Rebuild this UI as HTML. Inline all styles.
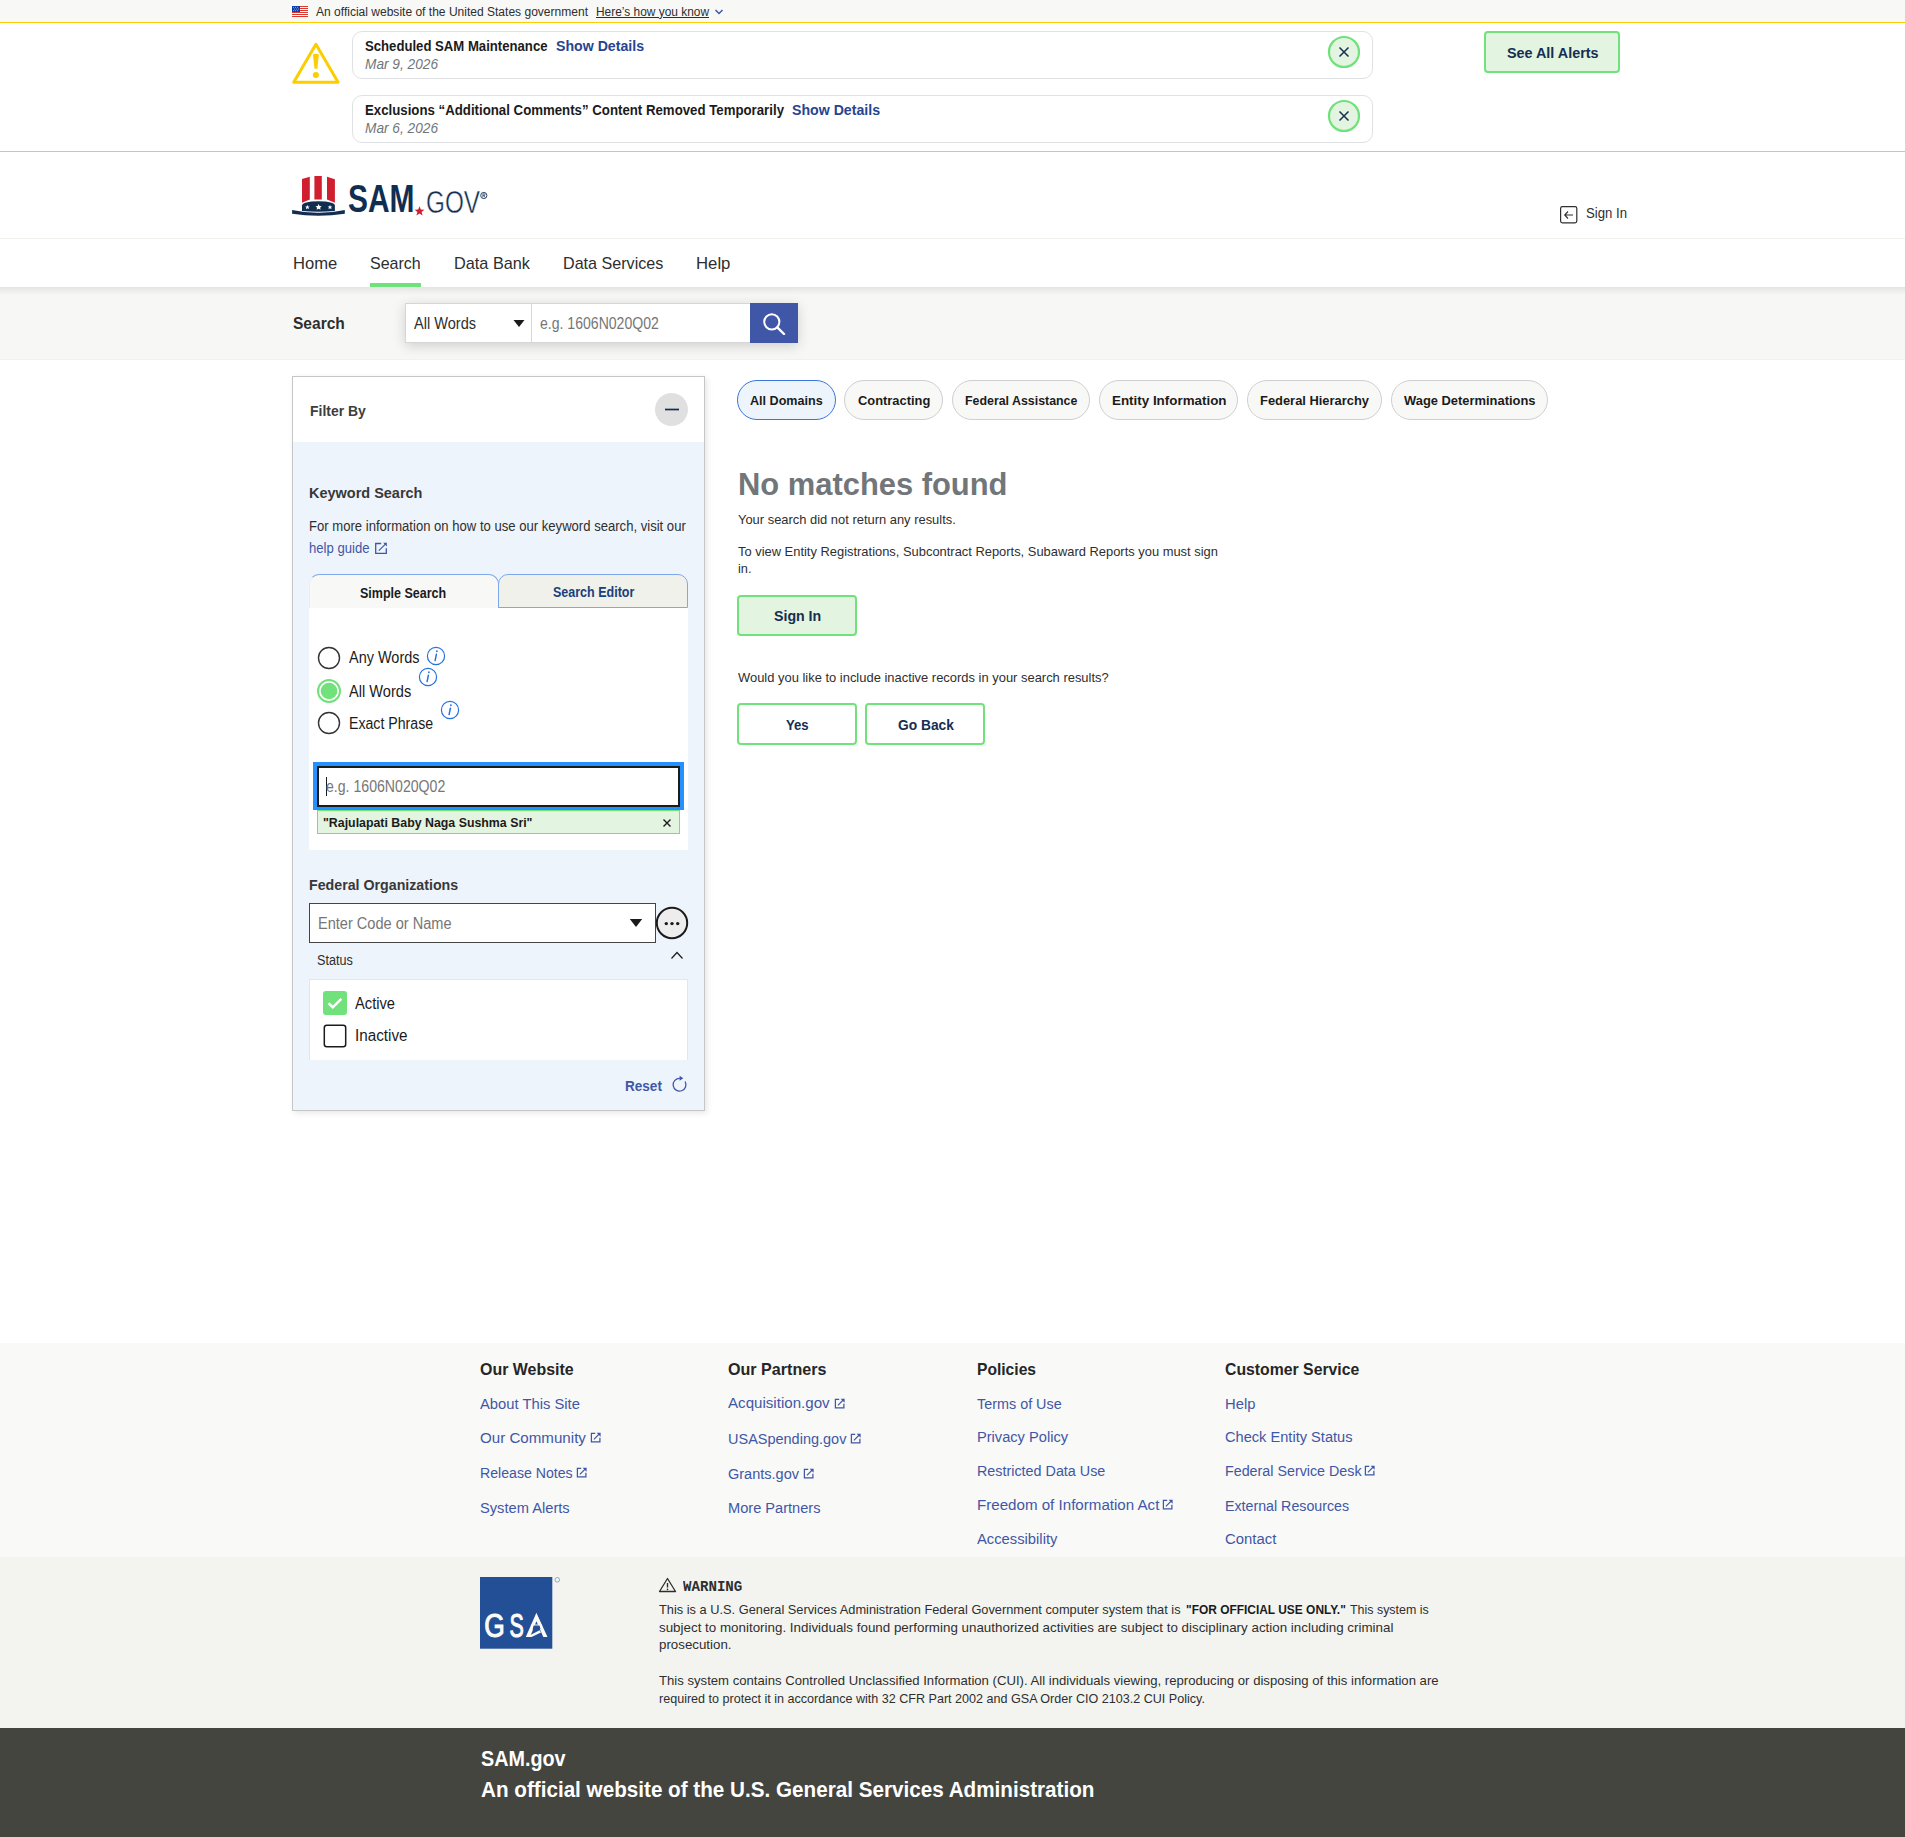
<!DOCTYPE html>
<html><head><meta charset="utf-8"><title>SAM.gov Search</title>
<style>
html,body{margin:0;padding:0;}
body{width:1905px;height:1837px;position:relative;overflow:hidden;background:#fff;font-family:'Liberation Sans', sans-serif;}
.t{position:absolute;white-space:pre;transform-origin:0 0;display:block;}
</style></head><body>
<div style="position:absolute;left:0px;top:0px;width:1905px;height:22px;background:#f8f8f6;"></div>
<div style="position:absolute;left:0px;top:22px;width:1905px;height:1px;background:#face00;"></div>
<svg style="position:absolute;left:292px;top:6px" width="16" height="11" viewBox="0 0 16 11">
<rect width="16" height="11" fill="#fff"/>
<g fill="#d83933"><rect y="0" width="16" height="1"/><rect y="2" width="16" height="1"/><rect y="4" width="16" height="1"/><rect y="6" width="16" height="1"/><rect y="8" width="16" height="1"/><rect y="10" width="16" height="1"/></g>
<rect width="8" height="6" fill="#0b3ea8"/>
<g fill="#fff"><circle cx="1.5" cy="1.2" r=".45"/><circle cx="3.5" cy="1.2" r=".45"/><circle cx="5.5" cy="1.2" r=".45"/><circle cx="2.5" cy="3" r=".45"/><circle cx="4.5" cy="3" r=".45"/><circle cx="6.5" cy="3" r=".45"/><circle cx="1.5" cy="4.8" r=".45"/><circle cx="3.5" cy="4.8" r=".45"/><circle cx="5.5" cy="4.8" r=".45"/></g>
</svg>
<svg style="position:absolute;left:714px;top:8px" width="10" height="8" viewBox="0 0 10 8"><path d="M1.5 2 L5 5.5 L8.5 2" fill="none" stroke="#3f57a6" stroke-width="1.5"/></svg>
<svg style="position:absolute;left:291px;top:41px" width="50" height="45" viewBox="0 0 50 45">
<path d="M24.9 3.3 L47.1 41.3 L2.7 41.3 Z" fill="none" stroke="#face00" stroke-width="3" stroke-linejoin="round"/>
<path d="M21.9 13.5 Q24.9 11.8 27.9 13.5 L26.3 27.8 L23.5 27.8 Z" fill="#face00"/>
<circle cx="24.9" cy="33.9" r="3" fill="#face00"/>
</svg>
<div style="position:absolute;left:352px;top:31px;width:1021px;height:48px;box-sizing:border-box;border:1px solid #dfe1e2;border-radius:10px;background:#fff;"></div>
<div style="position:absolute;left:352px;top:95px;width:1021px;height:48px;box-sizing:border-box;border:1px solid #dfe1e2;border-radius:10px;background:#fff;"></div>
<svg style="position:absolute;left:1327px;top:35px" width="34" height="34" viewBox="0 0 34 34">
<circle cx="17" cy="17" r="15" fill="#e3f4e0" stroke="#70e17b" stroke-width="2.2"/>
<path d="M12.5 12.5 L21.5 21.5 M21.5 12.5 L12.5 21.5" stroke="#162e51" stroke-width="1.5"/>
</svg>
<svg style="position:absolute;left:1327px;top:99px" width="34" height="34" viewBox="0 0 34 34">
<circle cx="17" cy="17" r="15" fill="#e3f4e0" stroke="#70e17b" stroke-width="2.2"/>
<path d="M12.5 12.5 L21.5 21.5 M21.5 12.5 L12.5 21.5" stroke="#162e51" stroke-width="1.5"/>
</svg>
<div style="position:absolute;left:1484px;top:31px;width:136px;height:42px;box-sizing:border-box;border:2px solid #70e17b;border-radius:4px;background:#e3f4e0;"></div>
<div style="position:absolute;left:0px;top:151px;width:1905px;height:1px;background:#face00;"></div>
<div style="position:absolute;left:0px;top:238px;width:1905px;height:1px;background:#f0f0ec;"></div>
<svg style="position:absolute;left:290px;top:174px" width="58" height="45" viewBox="0 0 58 45">
<path d="M12 5.1 L19.8 2.8 L19.8 25.6 L12 28.7 Z" fill="#d01f2e"/>
<path d="M24.4 2 L31.8 2 L31.8 25.6 Q28.1 25.2 24.4 25.6 Z" fill="#d01f2e"/>
<path d="M37 2.8 L44.9 5.3 L44.9 28.7 L37 25.6 Z" fill="#d01f2e"/>
<path d="M12 31.5 Q12.5 27.4 28.4 27.2 Q44.4 27.4 44.9 31.5 L44.9 37 Q28.4 38.4 12 37 Z" fill="#112e51"/>
<g fill="#fff"><path d="M17.4 30.9 l.7 1.5 1.6 .15 -1.2 1.05 .4 1.6 -1.5-.85 -1.5 .85 .4-1.6 -1.2-1.05 1.6-.15z"/><path d="M28.6 30.1 l.95 2 2.15 .2 -1.6 1.4 .5 2.15 -2-1.15 -2 1.15 .5-2.15 -1.6-1.4 2.15-.2z"/><path d="M40 30.9 l.7 1.5 1.6 .15 -1.2 1.05 .4 1.6 -1.5-.85 -1.5 .85 .4-1.6 -1.2-1.05 1.6-.15z"/></g>
<path d="M2.1 36 Q15 38.9 28.4 38.8 Q41.8 38.9 54.8 36 L54.8 39.8 Q41.8 41.8 28.4 41.8 Q15 41.8 2.1 39.8 Z" fill="#112e51"/>
</svg>
<svg style="position:absolute;left:414px;top:206px" width="11" height="10" viewBox="0 0 11 10"><path d="M5.5 0.3 L6.8 3.6 L10.4 3.7 L7.6 5.9 L8.6 9.4 L5.5 7.4 L2.4 9.4 L3.4 5.9 L0.6 3.7 L4.2 3.6 Z" fill="#d21f30"/></svg>
<svg style="position:absolute;left:479px;top:191px" width="10" height="10" viewBox="0 0 10 10"><circle cx="4.8" cy="4.5" r="3.1" fill="none" stroke="#112e51" stroke-width="0.9"/><path d="M3.9 6.4 L3.9 2.8 L5.1 2.8 Q6.1 2.9 6.1 3.7 Q6.1 4.5 5.1 4.6 L3.9 4.6 M5 4.6 L6.1 6.4" fill="none" stroke="#112e51" stroke-width="0.7"/></svg>
<svg style="position:absolute;left:1559px;top:205px" width="20" height="19" viewBox="0 0 20 19"><rect x="1.6" y="1.6" width="16.2" height="16.2" rx="1.8" fill="none" stroke="#2e2e2e" stroke-width="1.2"/><path d="M14 10 L6 10 M9 6.5 L5.7 10 L9 13.5" fill="none" stroke="#2e2e2e" stroke-width="1.1"/></svg>
<div style="position:absolute;left:370px;top:283px;width:51px;height:4px;background:#70e17b;"></div>
<div style="position:absolute;left:0px;top:287px;width:1905px;height:72px;background:#f7f7f5;"></div>
<div style="position:absolute;left:0px;top:287px;width:1905px;height:8px;background:linear-gradient(#e4e4e2, rgba(247,247,245,0));"></div>
<div style="position:absolute;left:0px;top:359px;width:1905px;height:1px;background:#f1f1ee;"></div>
<div style="position:absolute;left:405px;top:303px;width:393px;height:40px;box-shadow:0 3px 12px rgba(0,0,0,0.16);"></div>
<div style="position:absolute;left:405px;top:303px;width:127px;height:40px;box-sizing:border-box;background:#fff;border:1px solid #d6d6d6;"></div>
<svg style="position:absolute;left:513px;top:319px" width="12" height="9" viewBox="0 0 12 9"><path d="M0.5 1 L11.5 1 L6 8 Z" fill="#1b1b1b"/></svg>
<div style="position:absolute;left:531px;top:303px;width:220px;height:40px;box-sizing:border-box;background:#fff;border:1px solid #d6d6d6;border-left:1px solid #d6d6d6;"></div>
<div style="position:absolute;left:750px;top:303px;width:48px;height:40px;background:#3f57a6;"></div>
<svg style="position:absolute;left:762px;top:312px" width="24" height="23" viewBox="0 0 24 23"><circle cx="9.8" cy="9.8" r="7.6" fill="none" stroke="#fff" stroke-width="2"/><path d="M15.3 15.3 L22 22" stroke="#fff" stroke-width="2.4" stroke-linecap="round"/></svg>
<div style="position:absolute;left:292px;top:376px;width:413px;height:735px;box-sizing:border-box;border:1px solid #c6c6c6;background:#eef4fb;box-shadow:2px 2px 6px rgba(0,0,0,0.10);"></div>
<div style="position:absolute;left:293px;top:377px;width:411px;height:65px;background:#fff;"></div>
<svg style="position:absolute;left:654px;top:392px" width="35" height="35" viewBox="0 0 35 35"><circle cx="17.5" cy="17.5" r="16.5" fill="#e0e0e0"/><path d="M11 17.5 L25 17.5" stroke="#112e51" stroke-width="1.7"/></svg>
<svg style="position:absolute;left:374px;top:542px" width="14" height="13" viewBox="0 0 14 13"><path d="M7.2 1.5 L1.7 1.5 L1.7 11.3 L12.3 11.3 L12.3 6.2" fill="none" stroke="#3f57a6" stroke-width="1.3"/><path d="M4.8 8.6 L12.2 1.4" stroke="#3f57a6" stroke-width="1.2"/><path d="M9.2 0.8 L12.8 0.8 L12.8 4.4 Z" fill="#3f57a6"/></svg>
<div style="position:absolute;left:309px;top:607px;width:379px;height:243px;background:#fff;"></div>
<div style="position:absolute;left:309px;top:574px;width:190px;height:34px;box-sizing:border-box;background:#f8f8f6;border:1px solid #7fa8ea;border-left-color:#e6eef9;border-bottom:none;border-radius:10px 10px 0 0;"></div>
<div style="position:absolute;left:498px;top:574px;width:190px;height:34px;box-sizing:border-box;background:#f1f1ec;border:1px solid #7fa8ea;border-radius:10px 10px 0 0;"></div>
<div style="position:absolute;left:309.5px;top:607px;width:188.5px;height:1px;background:#f8f8f6;"></div>
<svg style="position:absolute;left:316px;top:645px" width="26" height="26" viewBox="0 0 26 26"><circle cx="13" cy="13" r="10.5" fill="#fff" stroke="#333" stroke-width="1.4"/></svg>
<svg style="position:absolute;left:316px;top:678px" width="26" height="26" viewBox="0 0 26 26"><circle cx="13" cy="13" r="11" fill="#fff" stroke="#70e17b" stroke-width="2"/><circle cx="13" cy="13" r="8.3" fill="#70e17b"/></svg>
<svg style="position:absolute;left:316px;top:710px" width="26" height="26" viewBox="0 0 26 26"><circle cx="13" cy="13" r="10.5" fill="#fff" stroke="#333" stroke-width="1.4"/></svg>
<svg style="position:absolute;left:426px;top:646.2px" width="20" height="20" viewBox="0 0 20 20"><circle cx="10" cy="10" r="8.6" fill="none" stroke="#2672de" stroke-width="1.2"/><path d="M10.9 5.2 l0 0.1" stroke="#2672de" stroke-width="1.8" stroke-linecap="round"/><path d="M10.4 8.2 L9.1 14.6" stroke="#2672de" stroke-width="1.5" stroke-linecap="round"/></svg>
<svg style="position:absolute;left:418px;top:666.8px" width="20" height="20" viewBox="0 0 20 20"><circle cx="10" cy="10" r="8.6" fill="none" stroke="#2672de" stroke-width="1.2"/><path d="M10.9 5.2 l0 0.1" stroke="#2672de" stroke-width="1.8" stroke-linecap="round"/><path d="M10.4 8.2 L9.1 14.6" stroke="#2672de" stroke-width="1.5" stroke-linecap="round"/></svg>
<svg style="position:absolute;left:440.1px;top:700.3px" width="20" height="20" viewBox="0 0 20 20"><circle cx="10" cy="10" r="8.6" fill="none" stroke="#2672de" stroke-width="1.2"/><path d="M10.9 5.2 l0 0.1" stroke="#2672de" stroke-width="1.8" stroke-linecap="round"/><path d="M10.4 8.2 L9.1 14.6" stroke="#2672de" stroke-width="1.5" stroke-linecap="round"/></svg>
<div style="position:absolute;left:313px;top:762px;width:371px;height:48px;box-sizing:border-box;border:4px solid #2491ff;background:#fff;"></div>
<div style="position:absolute;left:317px;top:766px;width:363px;height:41px;box-sizing:border-box;border:2px solid #1b1b1b;background:#fff;"></div>
<div style="position:absolute;left:326px;top:777px;width:1px;height:19px;background:#1b1b1b;"></div>
<div style="position:absolute;left:317px;top:810px;width:363px;height:24px;box-sizing:border-box;border:1px solid #70e17b;background:#e3f4e0;"></div>
<svg style="position:absolute;left:662px;top:818px" width="10" height="10" viewBox="0 0 10 10"><path d="M1.5 1.5 L8.5 8.5 M8.5 1.5 L1.5 8.5" stroke="#1b1b1b" stroke-width="1.4"/></svg>
<div style="position:absolute;left:309px;top:903px;width:347px;height:40px;box-sizing:border-box;border:1.5px solid #454545;background:#fff;"></div>
<svg style="position:absolute;left:629px;top:918px" width="14" height="10" viewBox="0 0 14 10"><path d="M0.8 1 L13.2 1 L7 9 Z" fill="#1b1b1b"/></svg>
<svg style="position:absolute;left:655px;top:906px" width="34" height="34" viewBox="0 0 34 34"><circle cx="17" cy="17" r="15.2" fill="#ededed" stroke="#1b1b1b" stroke-width="2"/><circle cx="11.3" cy="17.6" r="1.7" fill="#1b1b1b"/><circle cx="17" cy="17.6" r="1.7" fill="#1b1b1b"/><circle cx="22.7" cy="17.6" r="1.7" fill="#1b1b1b"/></svg>
<svg style="position:absolute;left:670px;top:950px" width="14" height="10" viewBox="0 0 14 10"><path d="M1.5 8.5 L7 2.5 L12.5 8.5" fill="none" stroke="#1b1b1b" stroke-width="1.2"/></svg>
<div style="position:absolute;left:309px;top:979px;width:379px;height:81px;box-sizing:border-box;border:1px solid #e3e6ea;border-bottom:none;background:#fff;"></div>
<svg style="position:absolute;left:322px;top:990px" width="26" height="26" viewBox="0 0 26 26"><rect x="1" y="1" width="24" height="24" rx="3" fill="#70e17b"/><path d="M6.5 13.2 L10.8 17.3 L19.3 8.8" fill="none" stroke="#fff" stroke-width="2.6"/></svg>
<svg style="position:absolute;left:322px;top:1023px" width="26" height="26" viewBox="0 0 26 26"><rect x="2.3" y="2.3" width="21.4" height="21.4" rx="2.5" fill="#fff" stroke="#1b1b1b" stroke-width="1.5"/></svg>
<svg style="position:absolute;left:671px;top:1075px" width="17" height="18" viewBox="0 0 17 18"><path d="M14.1 6.5 A6.4 6.4 0 1 1 8.9 3.3" fill="none" stroke="#3f57a6" stroke-width="1.3"/><path d="M8.6 0.8 L12.3 3.3 L8.6 5.8 Z" fill="#3f57a6"/></svg>
<div style="position:absolute;left:737px;top:380px;width:99px;height:40px;box-sizing:border-box;border:1px solid #3a77d8;background:#eef4fb;border-radius:20px;"></div>
<div style="position:absolute;left:844.3px;top:380px;width:98.4px;height:40px;box-sizing:border-box;border:1px solid #cfcfcf;background:#f8f8f6;border-radius:20px;"></div>
<div style="position:absolute;left:951.5px;top:380px;width:138.9px;height:40px;box-sizing:border-box;border:1px solid #cfcfcf;background:#f8f8f6;border-radius:20px;"></div>
<div style="position:absolute;left:1099.2px;top:380px;width:138.8px;height:40px;box-sizing:border-box;border:1px solid #cfcfcf;background:#f8f8f6;border-radius:20px;"></div>
<div style="position:absolute;left:1247px;top:380px;width:135.2px;height:40px;box-sizing:border-box;border:1px solid #cfcfcf;background:#f8f8f6;border-radius:20px;"></div>
<div style="position:absolute;left:1391px;top:380px;width:157px;height:40px;box-sizing:border-box;border:1px solid #cfcfcf;background:#f8f8f6;border-radius:20px;"></div>
<div style="position:absolute;left:737px;top:595px;width:120px;height:41px;box-sizing:border-box;border:2px solid #70e17b;background:#e3f4e0;border-radius:4px;"></div>
<div style="position:absolute;left:737px;top:703px;width:120px;height:42px;box-sizing:border-box;border:2px solid #70e17b;background:#fff;border-radius:4px;"></div>
<div style="position:absolute;left:865px;top:703px;width:120px;height:42px;box-sizing:border-box;border:2px solid #70e17b;background:#fff;border-radius:4px;"></div>
<div style="position:absolute;left:0px;top:1343px;width:1905px;height:214px;background:#f9f9f7;"></div>
<div style="position:absolute;left:0px;top:1557px;width:1905px;height:171px;background:#f3f4ef;"></div>
<div style="position:absolute;left:0px;top:1728px;width:1905px;height:109px;background:#454540;"></div>
<svg style="position:absolute;left:590px;top:1432.2px" width="12" height="12" viewBox="0 0 12 12"><path d="M5.2 1.4 L1.4 1.4 L1.4 9.9 L9.9 9.9 L9.9 5.8" fill="none" stroke="#3f57a6" stroke-width="1.25"/><path d="M3.9 7.3 L9.7 1.5" stroke="#3f57a6" stroke-width="1.15"/><path d="M6.6 0.7 L10.6 0.7 L10.6 4.7 Z" fill="#3f57a6"/></svg>
<svg style="position:absolute;left:576px;top:1467px" width="12" height="12" viewBox="0 0 12 12"><path d="M5.2 1.4 L1.4 1.4 L1.4 9.9 L9.9 9.9 L9.9 5.8" fill="none" stroke="#3f57a6" stroke-width="1.25"/><path d="M3.9 7.3 L9.7 1.5" stroke="#3f57a6" stroke-width="1.15"/><path d="M6.6 0.7 L10.6 0.7 L10.6 4.7 Z" fill="#3f57a6"/></svg>
<svg style="position:absolute;left:834px;top:1397.5px" width="12" height="12" viewBox="0 0 12 12"><path d="M5.2 1.4 L1.4 1.4 L1.4 9.9 L9.9 9.9 L9.9 5.8" fill="none" stroke="#3f57a6" stroke-width="1.25"/><path d="M3.9 7.3 L9.7 1.5" stroke="#3f57a6" stroke-width="1.15"/><path d="M6.6 0.7 L10.6 0.7 L10.6 4.7 Z" fill="#3f57a6"/></svg>
<svg style="position:absolute;left:850px;top:1433px" width="12" height="12" viewBox="0 0 12 12"><path d="M5.2 1.4 L1.4 1.4 L1.4 9.9 L9.9 9.9 L9.9 5.8" fill="none" stroke="#3f57a6" stroke-width="1.25"/><path d="M3.9 7.3 L9.7 1.5" stroke="#3f57a6" stroke-width="1.15"/><path d="M6.6 0.7 L10.6 0.7 L10.6 4.7 Z" fill="#3f57a6"/></svg>
<svg style="position:absolute;left:803px;top:1468px" width="12" height="12" viewBox="0 0 12 12"><path d="M5.2 1.4 L1.4 1.4 L1.4 9.9 L9.9 9.9 L9.9 5.8" fill="none" stroke="#3f57a6" stroke-width="1.25"/><path d="M3.9 7.3 L9.7 1.5" stroke="#3f57a6" stroke-width="1.15"/><path d="M6.6 0.7 L10.6 0.7 L10.6 4.7 Z" fill="#3f57a6"/></svg>
<svg style="position:absolute;left:1162px;top:1499.3px" width="12" height="12" viewBox="0 0 12 12"><path d="M5.2 1.4 L1.4 1.4 L1.4 9.9 L9.9 9.9 L9.9 5.8" fill="none" stroke="#3f57a6" stroke-width="1.25"/><path d="M3.9 7.3 L9.7 1.5" stroke="#3f57a6" stroke-width="1.15"/><path d="M6.6 0.7 L10.6 0.7 L10.6 4.7 Z" fill="#3f57a6"/></svg>
<svg style="position:absolute;left:1364px;top:1465px" width="12" height="12" viewBox="0 0 12 12"><path d="M5.2 1.4 L1.4 1.4 L1.4 9.9 L9.9 9.9 L9.9 5.8" fill="none" stroke="#3f57a6" stroke-width="1.25"/><path d="M3.9 7.3 L9.7 1.5" stroke="#3f57a6" stroke-width="1.15"/><path d="M6.6 0.7 L10.6 0.7 L10.6 4.7 Z" fill="#3f57a6"/></svg>
<svg style="position:absolute;left:480px;top:1577px" width="81" height="72" viewBox="0 0 81 72"><rect x="0" y="0" width="72.3" height="71.7" fill="#234f96"/>
<text x="4.3" y="60.1" font-family="Liberation Sans" font-size="34" fill="#fbfbf7" stroke="#fbfbf7" stroke-width="1.1" textLength="20.5" lengthAdjust="spacingAndGlyphs">G</text>
<text x="29.6" y="60.1" font-family="Liberation Sans" font-size="34" fill="#fbfbf7" stroke="#fbfbf7" stroke-width="1.1" textLength="14.3" lengthAdjust="spacingAndGlyphs">S</text>
<path d="M45.8 60.1 L56.4 35.7 L67.5 60.1 L63.3 60.1 L56.4 44.3 L50 60.1 Z" fill="#fbfbf7"/>
<path d="M51.3 47.4 L61.6 47.4 L62.3 49 L50.6 49 Z" fill="#fbfbf7"/>
<path d="M46.5 60.1 L51.5 60.1 L61 55.6 L59.6 53.2 Z" fill="#fbfbf7"/>
<path d="M53.6 48.6 L59.5 48.6 L60.5 52 L57.2 53.2 L52.6 52.4 Z" fill="#234f96"/>
<circle cx="77.3" cy="2.8" r="2.3" fill="none" stroke="#7f97c4" stroke-width="0.8"/></svg>
<svg style="position:absolute;left:658px;top:1577px" width="19" height="16" viewBox="0 0 19 16"><path d="M9.5 1.5 L17.5 14.5 L1.5 14.5 Z" fill="none" stroke="#2e2e2e" stroke-width="1.3" stroke-linejoin="round"/><path d="M9.5 6 L9.5 10.5" stroke="#2e2e2e" stroke-width="1.4"/><circle cx="9.5" cy="12.4" r=".8" fill="#2e2e2e"/></svg>
<span class="t" style="left:316px;top:5.84px;font-size:12px;line-height:12px;font-family:'Liberation Sans', sans-serif;font-weight:400;color:#2e2e2e;transform:scaleX(1.0027);">An official website of the United States government</span>
<span class="t" style="left:596px;top:5.84px;font-size:12px;line-height:12px;font-family:'Liberation Sans', sans-serif;font-weight:400;color:#2e2e2e;transform:scaleX(0.9926);text-decoration:underline;">Here’s how you know</span>
<span class="t" style="left:365px;top:39.15px;font-size:14px;line-height:14px;font-family:'Liberation Sans', sans-serif;font-weight:700;color:#1b1b1b;transform:scaleX(0.9384);">Scheduled SAM Maintenance</span>
<span class="t" style="left:556px;top:39.15px;font-size:14px;line-height:14px;font-family:'Liberation Sans', sans-serif;font-weight:700;color:#27448f;transform:scaleX(1.0099);">Show Details</span>
<span class="t" style="left:365px;top:57.15px;font-size:14px;line-height:14px;font-family:'Liberation Sans', sans-serif;font-weight:400;color:#71767a;transform:scaleX(0.9770);font-style:italic;">Mar 9, 2026</span>
<span class="t" style="left:365px;top:103.15px;font-size:14px;line-height:14px;font-family:'Liberation Sans', sans-serif;font-weight:700;color:#1b1b1b;transform:scaleX(0.9455);">Exclusions “Additional Comments” Content Removed Temporarily</span>
<span class="t" style="left:792px;top:103.15px;font-size:14px;line-height:14px;font-family:'Liberation Sans', sans-serif;font-weight:700;color:#27448f;transform:scaleX(1.0099);">Show Details</span>
<span class="t" style="left:365px;top:121.15px;font-size:14px;line-height:14px;font-family:'Liberation Sans', sans-serif;font-weight:400;color:#71767a;transform:scaleX(0.9770);font-style:italic;">Mar 6, 2026</span>
<span class="t" style="left:1507px;top:45.30px;font-size:15px;line-height:15px;font-family:'Liberation Sans', sans-serif;font-weight:700;color:#162e51;transform:scaleX(0.9570);">See All Alerts</span>
<span class="t" style="left:347.6px;top:180.21px;font-size:38.5px;line-height:38.5px;font-family:'Liberation Sans', sans-serif;font-weight:700;color:#112e51;transform:scaleX(0.7772);">SAM</span>
<span class="t" style="left:425.8px;top:187.16px;font-size:31px;line-height:31px;font-family:'Liberation Sans', sans-serif;font-weight:400;color:#112e51;transform:scaleX(0.7837);-webkit-text-stroke:0.45px #fff;">GOV</span>
<span class="t" style="left:1586px;top:204.88px;font-size:15.5px;line-height:15.5px;font-family:'Liberation Sans', sans-serif;font-weight:400;color:#2e2e2e;transform:scaleX(0.8495);">Sign In</span>
<span class="t" style="left:292.7px;top:254.61px;font-size:17px;line-height:17px;font-family:'Liberation Sans', sans-serif;font-weight:400;color:#2e2e2e;transform:scaleX(0.9766);">Home</span>
<span class="t" style="left:370px;top:254.61px;font-size:17px;line-height:17px;font-family:'Liberation Sans', sans-serif;font-weight:400;color:#2e2e2e;transform:scaleX(0.9411);">Search</span>
<span class="t" style="left:454px;top:254.61px;font-size:17px;line-height:17px;font-family:'Liberation Sans', sans-serif;font-weight:400;color:#2e2e2e;transform:scaleX(0.9573);">Data Bank</span>
<span class="t" style="left:562.7px;top:254.61px;font-size:17px;line-height:17px;font-family:'Liberation Sans', sans-serif;font-weight:400;color:#2e2e2e;transform:scaleX(0.9478);">Data Services</span>
<span class="t" style="left:695.6px;top:254.61px;font-size:17px;line-height:17px;font-family:'Liberation Sans', sans-serif;font-weight:400;color:#2e2e2e;transform:scaleX(0.9837);">Help</span>
<span class="t" style="left:292.5px;top:314.61px;font-size:17px;line-height:17px;font-family:'Liberation Sans', sans-serif;font-weight:700;color:#2e2e2e;transform:scaleX(0.9135);">Search</span>
<span class="t" style="left:414.4px;top:315.66px;font-size:16px;line-height:16px;font-family:'Liberation Sans', sans-serif;font-weight:400;color:#2e2e2e;transform:scaleX(0.9095);">All Words</span>
<span class="t" style="left:540.4px;top:315.66px;font-size:16px;line-height:16px;font-family:'Liberation Sans', sans-serif;font-weight:400;color:#767676;transform:scaleX(0.8786);">e.g. 1606N020Q02</span>
<span class="t" style="left:309.5px;top:402.68px;font-size:15.5px;line-height:15.5px;font-family:'Liberation Sans', sans-serif;font-weight:700;color:#3d3d3d;transform:scaleX(0.8998);">Filter By</span>
<span class="t" style="left:309.3px;top:485.00px;font-size:15px;line-height:15px;font-family:'Liberation Sans', sans-serif;font-weight:700;color:#383838;transform:scaleX(0.9647);">Keyword Search</span>
<span class="t" style="left:309px;top:519.35px;font-size:14px;line-height:14px;font-family:'Liberation Sans', sans-serif;font-weight:400;color:#2e2e2e;transform:scaleX(0.9348);">For more information on how to use our keyword search, visit our</span>
<span class="t" style="left:309px;top:541.15px;font-size:14px;line-height:14px;font-family:'Liberation Sans', sans-serif;font-weight:400;color:#3f57a6;transform:scaleX(0.9377);">help guide</span>
<span class="t" style="left:360.1px;top:585.65px;font-size:14px;line-height:14px;font-family:'Liberation Sans', sans-serif;font-weight:700;color:#1b1b1b;transform:scaleX(0.8933);">Simple Search</span>
<span class="t" style="left:552.5px;top:584.65px;font-size:14px;line-height:14px;font-family:'Liberation Sans', sans-serif;font-weight:700;color:#1a3f7a;transform:scaleX(0.8931);">Search Editor</span>
<span class="t" style="left:348.8px;top:649.56px;font-size:16px;line-height:16px;font-family:'Liberation Sans', sans-serif;font-weight:400;color:#1b1b1b;transform:scaleX(0.9044);">Any Words</span>
<span class="t" style="left:348.8px;top:683.76px;font-size:16px;line-height:16px;font-family:'Liberation Sans', sans-serif;font-weight:400;color:#1b1b1b;transform:scaleX(0.9124);">All Words</span>
<span class="t" style="left:348.8px;top:716.46px;font-size:16px;line-height:16px;font-family:'Liberation Sans', sans-serif;font-weight:400;color:#1b1b1b;transform:scaleX(0.8838);">Exact Phrase</span>
<span class="t" style="left:325.7px;top:778.86px;font-size:16px;line-height:16px;font-family:'Liberation Sans', sans-serif;font-weight:400;color:#767676;transform:scaleX(0.8823);">e.g. 1606N020Q02</span>
<span class="t" style="left:323.4px;top:815.57px;font-size:13.5px;line-height:13.5px;font-family:'Liberation Sans', sans-serif;font-weight:700;color:#1b1b1b;transform:scaleX(0.9153);">"Rajulapati Baby Naga Sushma Sri"</span>
<span class="t" style="left:309.3px;top:877.30px;font-size:15px;line-height:15px;font-family:'Liberation Sans', sans-serif;font-weight:700;color:#383838;transform:scaleX(0.9470);">Federal Organizations</span>
<span class="t" style="left:318.1px;top:915.76px;font-size:16px;line-height:16px;font-family:'Liberation Sans', sans-serif;font-weight:400;color:#767676;transform:scaleX(0.9098);">Enter Code or Name</span>
<span class="t" style="left:317.4px;top:952.55px;font-size:14px;line-height:14px;font-family:'Liberation Sans', sans-serif;font-weight:400;color:#2e2e2e;transform:scaleX(0.9017);">Status</span>
<span class="t" style="left:355px;top:996.46px;font-size:16px;line-height:16px;font-family:'Liberation Sans', sans-serif;font-weight:400;color:#1b1b1b;transform:scaleX(0.9179);">Active</span>
<span class="t" style="left:355px;top:1027.76px;font-size:16px;line-height:16px;font-family:'Liberation Sans', sans-serif;font-weight:400;color:#1b1b1b;transform:scaleX(0.9521);">Inactive</span>
<span class="t" style="left:625.3px;top:1078.30px;font-size:15px;line-height:15px;font-family:'Liberation Sans', sans-serif;font-weight:700;color:#3f57a6;transform:scaleX(0.9031);">Reset</span>
<span class="t" style="left:750px;top:394.40px;font-size:13px;line-height:13px;font-family:'Liberation Sans', sans-serif;font-weight:700;color:#1b1b1b;transform:scaleX(0.9677);">All Domains</span>
<span class="t" style="left:857.6px;top:394.40px;font-size:13px;line-height:13px;font-family:'Liberation Sans', sans-serif;font-weight:700;color:#1b1b1b;transform:scaleX(0.9910);">Contracting</span>
<span class="t" style="left:964.6px;top:394.40px;font-size:13px;line-height:13px;font-family:'Liberation Sans', sans-serif;font-weight:700;color:#1b1b1b;transform:scaleX(0.9523);">Federal Assistance</span>
<span class="t" style="left:1111.5px;top:394.40px;font-size:13px;line-height:13px;font-family:'Liberation Sans', sans-serif;font-weight:700;color:#1b1b1b;transform:scaleX(1.0295);">Entity Information</span>
<span class="t" style="left:1260px;top:394.40px;font-size:13px;line-height:13px;font-family:'Liberation Sans', sans-serif;font-weight:700;color:#1b1b1b;transform:scaleX(0.9923);">Federal Hierarchy</span>
<span class="t" style="left:1403.5px;top:394.40px;font-size:13px;line-height:13px;font-family:'Liberation Sans', sans-serif;font-weight:700;color:#1b1b1b;transform:scaleX(0.9929);">Wage Determinations</span>
<span class="t" style="left:737.7px;top:468.76px;font-size:31px;line-height:31px;font-family:'Liberation Sans', sans-serif;font-weight:700;color:#71767a;transform:scaleX(0.9966);">No matches found</span>
<span class="t" style="left:737.5px;top:512.87px;font-size:13.5px;line-height:13.5px;font-family:'Liberation Sans', sans-serif;font-weight:400;color:#2e2e2e;transform:scaleX(0.9568);">Your search did not return any results.</span>
<span class="t" style="left:737.5px;top:544.57px;font-size:13.5px;line-height:13.5px;font-family:'Liberation Sans', sans-serif;font-weight:400;color:#2e2e2e;transform:scaleX(0.9560);">To view Entity Registrations, Subcontract Reports, Subaward Reports you must sign</span>
<span class="t" style="left:737.5px;top:561.97px;font-size:13.5px;line-height:13.5px;font-family:'Liberation Sans', sans-serif;font-weight:400;color:#2e2e2e;transform:scaleX(0.9463);">in.</span>
<span class="t" style="left:773.8px;top:608.10px;font-size:15px;line-height:15px;font-family:'Liberation Sans', sans-serif;font-weight:700;color:#162e51;transform:scaleX(0.9440);">Sign In</span>
<span class="t" style="left:737.5px;top:670.57px;font-size:13.5px;line-height:13.5px;font-family:'Liberation Sans', sans-serif;font-weight:400;color:#2e2e2e;transform:scaleX(0.9580);">Would you like to include inactive records in your search results?</span>
<span class="t" style="left:786px;top:717.10px;font-size:15px;line-height:15px;font-family:'Liberation Sans', sans-serif;font-weight:700;color:#162e51;transform:scaleX(0.8773);">Yes</span>
<span class="t" style="left:897.5px;top:717.10px;font-size:15px;line-height:15px;font-family:'Liberation Sans', sans-serif;font-weight:700;color:#162e51;transform:scaleX(0.9185);">Go Back</span>
<span class="t" style="left:480.3px;top:1361.01px;font-size:17px;line-height:17px;font-family:'Liberation Sans', sans-serif;font-weight:700;color:#262626;transform:scaleX(0.9386);">Our Website</span>
<span class="t" style="left:728.3px;top:1361.01px;font-size:17px;line-height:17px;font-family:'Liberation Sans', sans-serif;font-weight:700;color:#262626;transform:scaleX(0.9467);">Our Partners</span>
<span class="t" style="left:976.7px;top:1361.01px;font-size:17px;line-height:17px;font-family:'Liberation Sans', sans-serif;font-weight:700;color:#262626;transform:scaleX(0.9181);">Policies</span>
<span class="t" style="left:1224.6px;top:1361.01px;font-size:17px;line-height:17px;font-family:'Liberation Sans', sans-serif;font-weight:700;color:#262626;transform:scaleX(0.9289);">Customer Service</span>
<span class="t" style="left:480.3px;top:1396.08px;font-size:15.5px;line-height:15.5px;font-family:'Liberation Sans', sans-serif;font-weight:400;color:#3f57a6;transform:scaleX(0.9528);">About This Site</span>
<span class="t" style="left:480.3px;top:1430.08px;font-size:15.5px;line-height:15.5px;font-family:'Liberation Sans', sans-serif;font-weight:400;color:#3f57a6;transform:scaleX(0.9758);">Our Community</span>
<span class="t" style="left:480.3px;top:1464.88px;font-size:15.5px;line-height:15.5px;font-family:'Liberation Sans', sans-serif;font-weight:400;color:#3f57a6;transform:scaleX(0.9108);">Release Notes</span>
<span class="t" style="left:480.3px;top:1499.88px;font-size:15.5px;line-height:15.5px;font-family:'Liberation Sans', sans-serif;font-weight:400;color:#3f57a6;transform:scaleX(0.9467);">System Alerts</span>
<span class="t" style="left:728.3px;top:1395.38px;font-size:15.5px;line-height:15.5px;font-family:'Liberation Sans', sans-serif;font-weight:400;color:#3f57a6;transform:scaleX(0.9744);">Acquisition.gov</span>
<span class="t" style="left:728.3px;top:1430.88px;font-size:15.5px;line-height:15.5px;font-family:'Liberation Sans', sans-serif;font-weight:400;color:#3f57a6;transform:scaleX(0.9347);">USASpending.gov</span>
<span class="t" style="left:728.3px;top:1465.88px;font-size:15.5px;line-height:15.5px;font-family:'Liberation Sans', sans-serif;font-weight:400;color:#3f57a6;transform:scaleX(0.9365);">Grants.gov</span>
<span class="t" style="left:728.3px;top:1500.48px;font-size:15.5px;line-height:15.5px;font-family:'Liberation Sans', sans-serif;font-weight:400;color:#3f57a6;transform:scaleX(0.9419);">More Partners</span>
<span class="t" style="left:976.7px;top:1395.98px;font-size:15.5px;line-height:15.5px;font-family:'Liberation Sans', sans-serif;font-weight:400;color:#3f57a6;transform:scaleX(0.9276);">Terms of Use</span>
<span class="t" style="left:976.7px;top:1429.38px;font-size:15.5px;line-height:15.5px;font-family:'Liberation Sans', sans-serif;font-weight:400;color:#3f57a6;transform:scaleX(0.9433);">Privacy Policy</span>
<span class="t" style="left:976.7px;top:1462.88px;font-size:15.5px;line-height:15.5px;font-family:'Liberation Sans', sans-serif;font-weight:400;color:#3f57a6;transform:scaleX(0.9250);">Restricted Data Use</span>
<span class="t" style="left:976.7px;top:1497.18px;font-size:15.5px;line-height:15.5px;font-family:'Liberation Sans', sans-serif;font-weight:400;color:#3f57a6;transform:scaleX(0.9756);">Freedom of Information Act</span>
<span class="t" style="left:976.7px;top:1531.48px;font-size:15.5px;line-height:15.5px;font-family:'Liberation Sans', sans-serif;font-weight:400;color:#3f57a6;transform:scaleX(0.9524);">Accessibility</span>
<span class="t" style="left:1224.6px;top:1395.88px;font-size:15.5px;line-height:15.5px;font-family:'Liberation Sans', sans-serif;font-weight:400;color:#3f57a6;transform:scaleX(0.9533);">Help</span>
<span class="t" style="left:1224.6px;top:1429.38px;font-size:15.5px;line-height:15.5px;font-family:'Liberation Sans', sans-serif;font-weight:400;color:#3f57a6;transform:scaleX(0.9426);">Check Entity Status</span>
<span class="t" style="left:1224.6px;top:1462.88px;font-size:15.5px;line-height:15.5px;font-family:'Liberation Sans', sans-serif;font-weight:400;color:#3f57a6;transform:scaleX(0.9219);">Federal Service Desk</span>
<span class="t" style="left:1224.6px;top:1497.58px;font-size:15.5px;line-height:15.5px;font-family:'Liberation Sans', sans-serif;font-weight:400;color:#3f57a6;transform:scaleX(0.9175);">External Resources</span>
<span class="t" style="left:1224.6px;top:1531.48px;font-size:15.5px;line-height:15.5px;font-family:'Liberation Sans', sans-serif;font-weight:400;color:#3f57a6;transform:scaleX(0.9622);">Contact</span>
<span class="t" style="left:683.2px;top:1580.00px;font-size:15px;line-height:15px;font-family:'Liberation Mono', monospace;font-weight:700;color:#2e2e2e;transform:scaleX(0.9410);">WARNING</span>
<span class="t" style="left:659.4px;top:1602.87px;font-size:13.5px;line-height:13.5px;font-family:'Liberation Sans', sans-serif;font-weight:400;color:#2e2e2e;transform:scaleX(0.9484);">This is a U.S. General Services Administration Federal Government computer system that is</span>
<span class="t" style="left:1185.5px;top:1602.87px;font-size:13.5px;line-height:13.5px;font-family:'Liberation Sans', sans-serif;font-weight:700;color:#1b1b1b;transform:scaleX(0.8837);">"FOR OFFICIAL USE ONLY."</span>
<span class="t" style="left:1349.7px;top:1602.87px;font-size:13.5px;line-height:13.5px;font-family:'Liberation Sans', sans-serif;font-weight:400;color:#2e2e2e;transform:scaleX(0.9203);">This system is</span>
<span class="t" style="left:659.4px;top:1620.57px;font-size:13.5px;line-height:13.5px;font-family:'Liberation Sans', sans-serif;font-weight:400;color:#2e2e2e;transform:scaleX(0.9906);">subject to monitoring. Individuals found performing unauthorized activities are subject to disciplinary action including criminal</span>
<span class="t" style="left:659.4px;top:1638.27px;font-size:13.5px;line-height:13.5px;font-family:'Liberation Sans', sans-serif;font-weight:400;color:#2e2e2e;transform:scaleX(0.9858);">prosecution.</span>
<span class="t" style="left:659.4px;top:1674.47px;font-size:13.5px;line-height:13.5px;font-family:'Liberation Sans', sans-serif;font-weight:400;color:#2e2e2e;transform:scaleX(0.9728);">This system contains Controlled Unclassified Information (CUI). All individuals viewing, reproducing or disposing of this information are</span>
<span class="t" style="left:659.4px;top:1692.07px;font-size:13.5px;line-height:13.5px;font-family:'Liberation Sans', sans-serif;font-weight:400;color:#2e2e2e;transform:scaleX(0.9307);">required to protect it in accordance with 32 CFR Part 2002 and GSA Order CIO 2103.2 CUI Policy.</span>
<span class="t" style="left:480.6px;top:1748.50px;font-size:21.5px;line-height:21.5px;font-family:'Liberation Sans', sans-serif;font-weight:700;color:#fff;transform:scaleX(0.9197);">SAM.gov</span>
<span class="t" style="left:480.6px;top:1779.50px;font-size:21.5px;line-height:21.5px;font-family:'Liberation Sans', sans-serif;font-weight:700;color:#fff;transform:scaleX(0.9609);">An official website of the U.S. General Services Administration</span>
</body></html>
